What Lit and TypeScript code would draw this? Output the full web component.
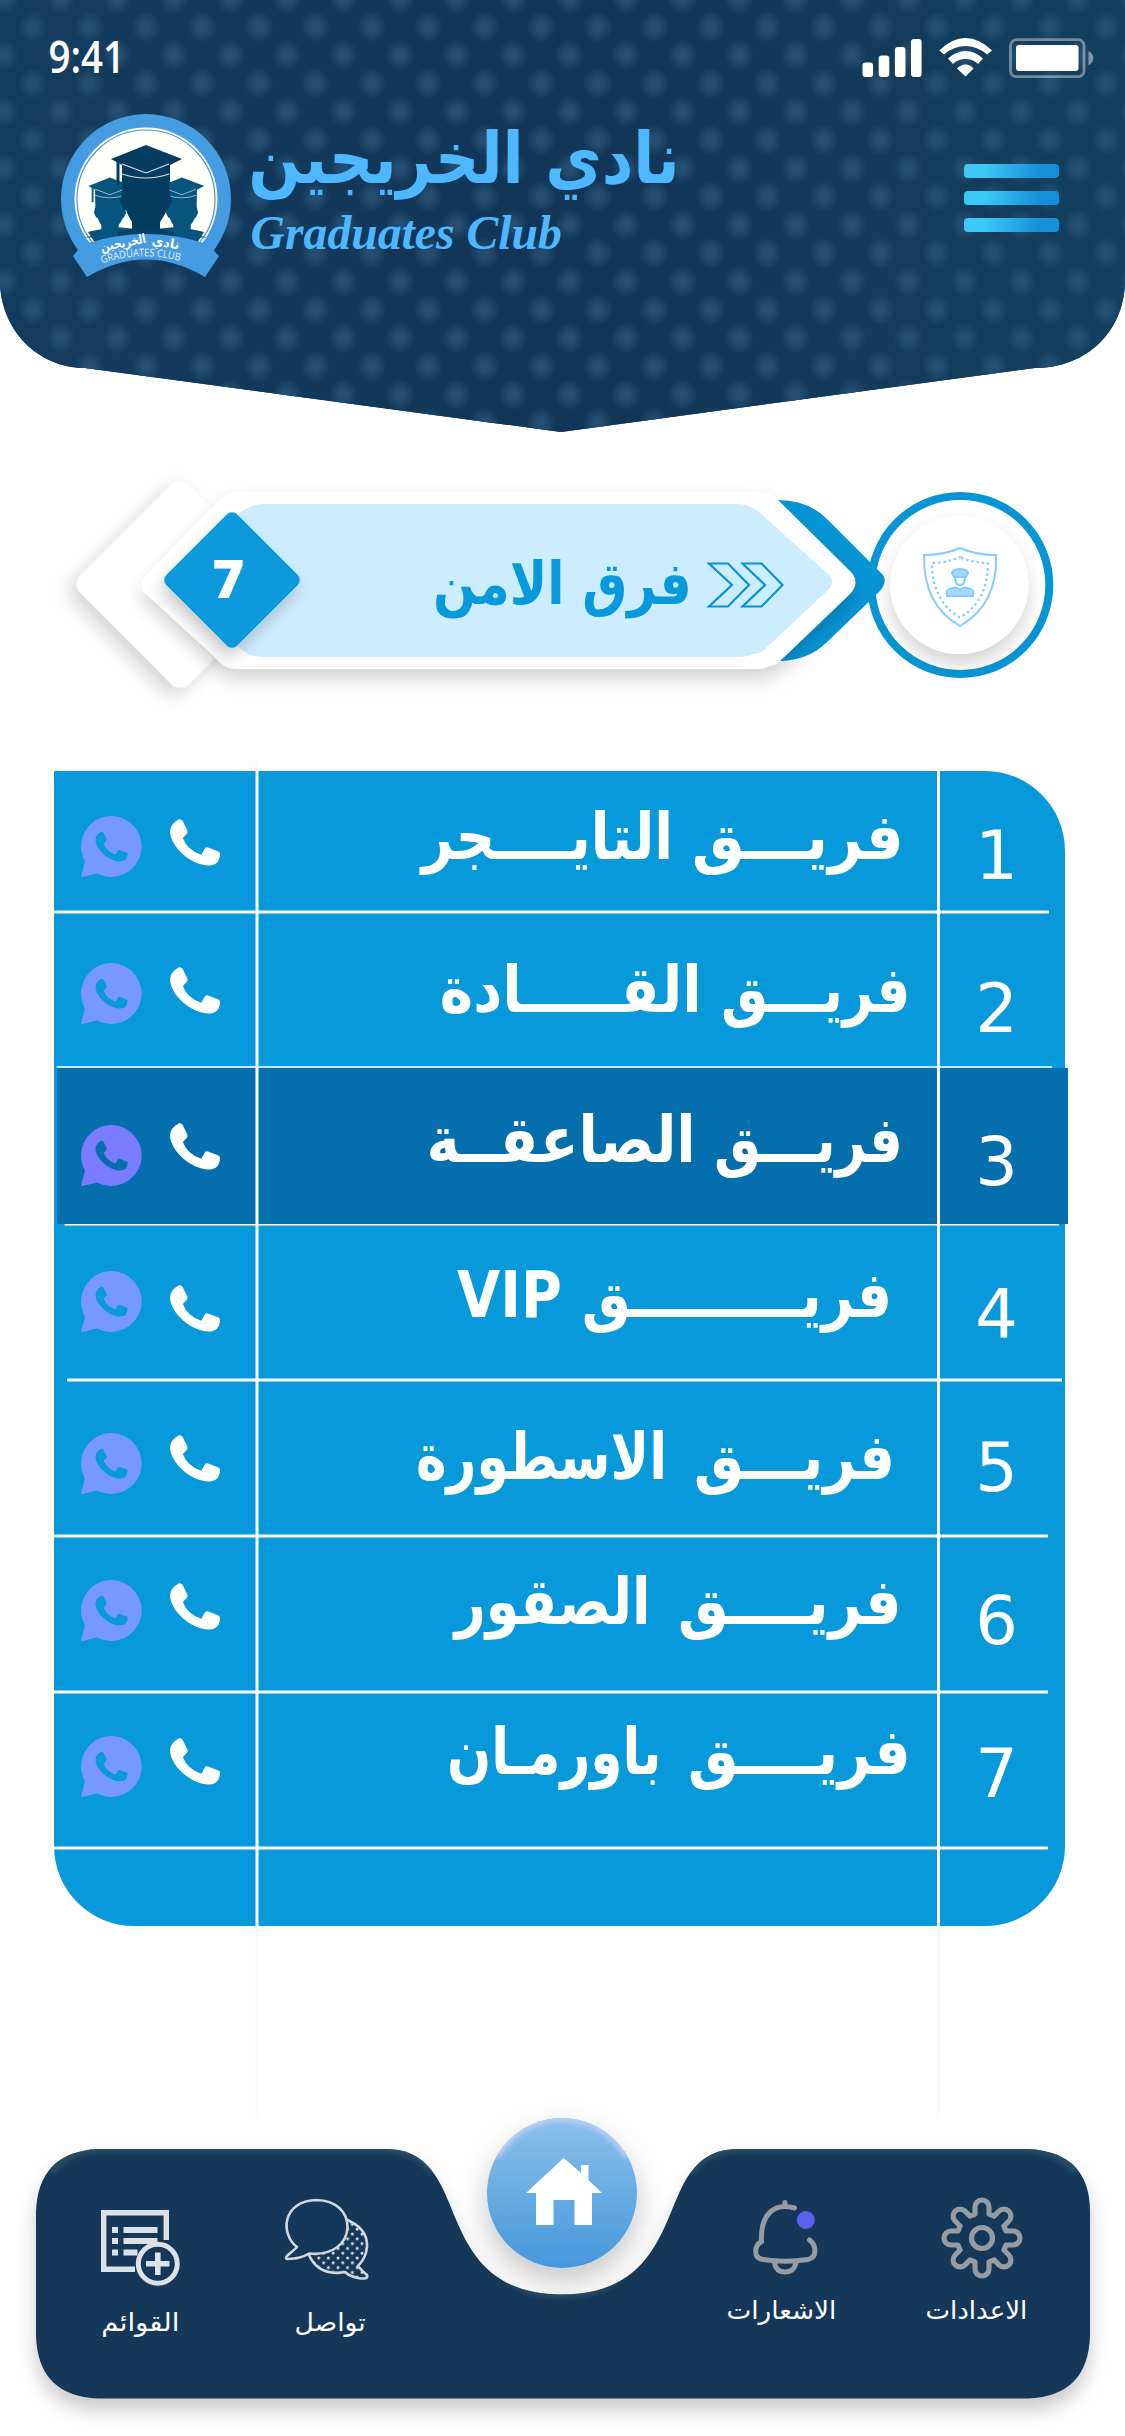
import { LitElement, html, css, svg } from "lit";
import { customElement, property } from "lit/decorators.js";
import { styleMap } from "lit/directives/style-map.js";

const ARABIC = '"DejaVu Sans", sans-serif';

/**
 * A line of text whose ink spans exactly `width` pixels, with its
 * baseline on the bottom edge of a box that is `rise` pixels high.
 */
@customElement("fit-label")
class FitLabel extends LitElement {
  static styles = css`
    :host { display: block; flex: none; direction: ltr; }
    .ink { display: inline-block; white-space: pre; transform-origin: 0 0; line-height: 1; vertical-align: top; }
  `;
  @property() text = "";
  @property() font = ARABIC;
  @property() face = "bold";
  @property({ type: Number }) width = 100;
  @property({ type: Number }) rise = 20;
  @property({ type: Number }) size = 0;

  render() {
    const ctx = document.createElement("canvas").getContext("2d")!;
    const rtl = /[\u0600-\u06ff]/.test(this.text);
    ctx.direction = rtl ? "rtl" : "ltr";
    ctx.textAlign = "left";
    ctx.font = `${this.face} 100px ${this.font}`;
    const m = ctx.measureText(this.text);
    const size = this.size || (100 * this.rise) / m.actualBoundingBoxAscent;
    const k = size / 100;
    const left = -m.actualBoundingBoxLeft * k;
    const right = m.actualBoundingBoxRight * k;
    const scale = this.width / (right - left);
    const up = m.fontBoundingBoxAscent * k;
    const down = m.fontBoundingBoxDescent * k;
    const baseline = (size - up - down) / 2 + up;
    const box = { display: "block", width: `${this.width}px`, height: `${this.rise}px` };
    const ink = {
      font: `${this.face} ${size}px/1 ${this.font}`,
      direction: rtl ? "rtl" : "ltr",
      transform: `translate(${-left * scale}px, ${this.rise - baseline}px) scaleX(${scale})`,
    };
    return html`<span style=${styleMap(box)}><span class="ink" style=${styleMap(ink)}>${this.text}</span></span>`;
  }
}

interface Team {
  no: number;
  top: number;
  base: number;
  numBase: number;
  phone: number;
  chat: number;
  words: [string, number, number][];
}

const TEAMS: Team[] = [
  { no: 1, top: 771, base: 858.5, numBase: 880, phone: 819, chat: 815.5, words: [["التايــــجر", 419, 668.5], ["فريـــق", 693.6, 899]] },
  { no: 2, top: 912, base: 1011.5, numBase: 1033, phone: 967, chat: 962.5, words: [["القـــــادة", 442, 697], ["فريـــق", 722.5, 906]] },
  { no: 3, top: 1068, base: 1161.5, numBase: 1186, phone: 1123, chat: 1124.5, words: [["الصاعقــة", 430, 691], ["فريـــق", 716, 899]] },
  { no: 4, top: 1224, base: 1317, numBase: 1339, phone: 1284.6, chat: 1271.3, words: [["VIP", 457, 560], ["فريـــــــــق", 584, 888]] },
  { no: 5, top: 1380, base: 1479, numBase: 1492, phone: 1434.8, chat: 1433.4, words: [["الاسطورة", 418, 662.7], ["فريـــق", 696, 891]] },
  { no: 6, top: 1536, base: 1623.5, numBase: 1645, phone: 1582.6, chat: 1580, words: [["الصقور", 452, 646], ["فريــــق", 679.5, 897]] },
  { no: 7, top: 1692, base: 1774, numBase: 1798, phone: 1738, chat: 1736.4, words: [["باورمـان", 450, 657.6], ["فريــــق", 690.5, 907]] },
];

const HANDSET = "M9 .3Q11.5 0 12.7 2L17.3 11.5Q18.2 13.5 16.6 15L12.9 19Q17 31 31.3 35.7L34.8 29.5Q36 27.8 38 28.5L48.5 32.6Q50 33.3 50 35Q49.5 46.5 38.5 46.6C21 46 .5 28 0 12.5Q.3 5 9 .3Z";

const gearPath = () => {
  const pt = (x: number, y: number, a: number) =>
    `${(x * Math.cos(a) - y * Math.sin(a)).toFixed(2)} ${(x * Math.sin(a) + y * Math.cos(a)).toFixed(2)}`;
  let d = "";
  for (let i = 0; i < 8; i++) {
    const a = (i * Math.PI) / 4;
    d += `${i ? "L" : "M"}${pt(-7, -24, a)}L${pt(-7, -31, a)}A7 7 0 0 1 ${pt(7, -31, a)}L${pt(7, -24, a)}`;
  }
  return d + "Z";
};

@customElement("club-crest")
class ClubCrest extends LitElement {
  static styles = css`
    :host { display: block; width: 172px; height: 166px; }
    svg { display: block; }
    .band { font: bold 13px "DejaVu Sans", sans-serif; fill: #fff; }
    .latin { font: 10.5px "Open Sans", sans-serif; fill: #e4f0fb; }
  `;
  render() {
    const grad = (tone: string) => svg`
      <path fill=${tone} d="M-35 -37L0 -51L36 -37L24 -31V-13Q23 -8 24 -2L26 6L22 14H21Q17 22 14 26V34Q22 42 40 46H-40Q-20 42 -14 34V26Q-18 20 -20 14H-22L-26 6L-24 -2Q-23 -8 -24 -13V-31Z"/>
      <path fill="none" stroke="#d5e4ee" stroke-width="1.1" d="M-24 -32L0 -23L23 -32M-24 -22Q0 -14 23 -22"/>
      <path stroke=${tone} stroke-width="3" d="M-28 -36V-11"/>`;
    return html`<svg width="172" height="166" viewBox="60 112 172 166">
      <defs><clipPath id="upper"><rect x="60" y="112" width="172" height="141"/></clipPath></defs>
      <g clip-path="url(#upper)">
        <circle cx="146" cy="199" r="85" fill="#469ce1"/>
        <circle cx="146" cy="199" r="71.5" fill="#fffffb"/>
        <circle cx="146" cy="199" r="69" fill="none" stroke="#4d93c4" stroke-width="1.2"/>
      </g>
      <path fill="#0a5078" d="M88 232Q100 229 116 227L146 230L176 227Q192 229 204 232L197 243H95Z"/>
      <g transform="translate(110 209) scale(.62)">${grad("#06557f")}</g>
      <g transform="translate(182 209) scale(.62)">${grad("#06557f")}</g>
      <g transform="translate(146 196)">${grad("#053c60")}</g>
      <path fill="#053f63" d="M118 233Q128 228 146 228T174 233V242H118Z"/>
      <path fill="#469ce1" d="M78 250L88 243Q146 225 204 243L213 250L219 256L205 277Q146 242 87 277L73 256Z"/>
      <path id="arc" fill="none" d="M102 263.500Q142 250 181 261.500"/>
      <text class="band" direction="rtl" text-anchor="middle" transform="translate(124 247) rotate(-11)" textLength="46" lengthAdjust="spacingAndGlyphs">الخريجين</text>
      <text class="band" direction="rtl" text-anchor="middle" transform="translate(165 247) rotate(9)" textLength="28" lengthAdjust="spacingAndGlyphs">نادي</text>
      <text class="latin"><textPath href="#arc" textLength="79" lengthAdjust="spacingAndGlyphs">GRADUATES CLUB</textPath></text>
    </svg>`;
  }
}

@customElement("app-header")
class AppHeader extends LitElement {
  static styles = css`
    :host { display: block; height: 432px; }
    .plate {
      display: flex; flex-direction: column; height: 432px; box-sizing: border-box;
      background-color: #123b5d;
      background-image:
        radial-gradient(ellipse 15px 16px at center, #254f71 0, rgba(37, 79, 113, .85) 35%, rgba(37, 79, 113, 0) 100%),
        radial-gradient(ellipse 15px 16px at center, #254f71 0, rgba(37, 79, 113, .85) 35%, rgba(37, 79, 113, 0) 100%),
        linear-gradient(90deg, #123c5e, #123658 45%, #123658 55%, #13405f);
      background-size: 56.5px 56.6px, 56.5px 56.6px, 100% 100%;
      background-position: 4.5px -1.5px, 32.7px 26.8px, 0 0;
      clip-path: path("M0 0H1125V280C1125 330 1088 368 1035 368L561 432L85 368C38 368 0 330 0 280Z");
    }
    .status { display: flex; padding: 37px 30px 0 49.5px; height: 40px; justify-content: space-between; }
    .time { padding-top: 5px; }
    .brand { display: flex; padding: 35px 66px 0 60px; }
    .names { display: flex; flex-direction: column; padding: 17px 0 0 20px; gap: 33px; color: #4db8ff; }
    .menu { margin: 52px 0 0 auto; display: flex; flex-direction: column; gap: 13px; }
    .bar { width: 95px; height: 14px; border-radius: 4px; background: linear-gradient(105deg, #3bc8f5 22%, #168fd8 80%); }
    .white { color: #fff; }
  `;
  render() {
    return html`<div class="plate">
      <div class="status">
        <fit-label class="time white" text="9:41" face="600" font='"Open Sans", sans-serif' .width=${68} .rise=${32}></fit-label>
        <svg width="235" height="42" viewBox="861 36 235 42" fill="#fff">
          <rect x="863.5" y="61.5" width="10.6" height="14.5" rx="3"/>
          <rect x="879.7" y="54.5" width="10.6" height="21.5" rx="3"/>
          <rect x="895.9" y="46" width="10.6" height="30" rx="3"/>
          <rect x="912" y="38" width="10.6" height="38" rx="3"/>
          <path d="M940.3 49.5Q953 37 966.5 37T993 49.5L988.3 53.5Q978 45 966.5 45T945 53.5ZM949 57.5Q957 50 966.5 50T984 57.5L979 63Q974 58 966.5 58T954 63ZM958 67.5Q962 63.5 966.5 63.5T974.5 67.5L966.5 75.5Z"/>
          <rect x="1011.5" y="38.7" width="73.5" height="37" rx="6" fill="none" stroke="#fff" stroke-opacity=".4" stroke-width="2.8"/>
          <rect x="1017" y="44" width="62.5" height="26" rx="3"/>
          <path fill-opacity=".45" d="M1089.5 50Q1094.3 52.5 1094.3 57T1089.5 64.5Z"/>
        </svg>
      </div>
      <div class="brand">
        <club-crest></club-crest>
        <div class="names">
          <fit-label text="نادي الخريجين" .width=${423} .rise=${54}></fit-label>
          <fit-label text="Graduates Club" face="italic bold" font='"Liberation Serif", serif' .width=${309} .rise=${33}></fit-label>
        </div>
        <div class="menu"><div class="bar"></div><div class="bar"></div><div class="bar"></div></div>
      </div>
    </div>`;
  }
}

@customElement("section-banner")
class SectionBanner extends LitElement {
  static styles = css`
    :host { display: grid; height: 339px; }
    .art, .texts { grid-area: 1 / 1; }
    .texts { display: flex; align-items: flex-start; padding: 129px 0 0 214px; color: #0799db; }
    .count { color: #fff; }
    .title { margin: -2px 0 0 193px; }
  `;
  render() {
    return html`
      <svg class="art" width="1125" height="339" viewBox="0 432 1125 339">
        <defs>
          <filter id="soft" x="-30%" y="-30%" width="160%" height="170%">
            <feDropShadow dx="0" dy="10" stdDeviation="9" flood-color="#000" flood-opacity=".17"/>
          </filter>
          <filter id="lift" x="-30%" y="-30%" width="160%" height="160%">
            <feDropShadow dx="4" dy="9" stdDeviation="8" flood-color="#000" flood-opacity=".2"/>
          </filter>
        </defs>
        <rect x="103.7" y="508.2" width="152.6" height="152.6" rx="12" fill="#fff" transform="rotate(45 180 584.5)" filter="url(#soft)"/>
        <circle cx="960.3" cy="585" r="89" fill="#fff" stroke="#0795d6" stroke-width="8"/>
        <path fill="#0795d6" d="M770 500H778Q808 500 827 519L880 572Q890 580 879 592L826 643Q808 660 781 661H770Z"/>
        <path fill="#fff" filter="url(#soft)" d="M145 577L213 507Q224 492 240 492H756Q770 492 778 500L850 571Q861 582 850 594L780 661Q776 665 770 665.500Q764 669 756 669H236Q224 669 214 656L146 594Q138 586 145 577Z"/>
        <path fill="#ccecff" d="M232 520Q247 504 264 504H738Q750 504 760 513L828 574Q836 582 828 590L764 650Q759 654 753 654Q747 657 738 657H264Q247 657 238 646Z"/>
        <rect x="182" y="530" width="100" height="100" rx="7" fill="#0799db" transform="rotate(45 232 580)" filter="url(#lift)"/>
        <g fill="none" stroke="#0795d6" stroke-width="2.2">
          <path d="M709 563.500H728L749 585L728 606.500H709L732 585Z"/>
          <path d="M742.500 563.500H761.500L782.500 585L761.500 606.500H742.500L765 585Z"/>
        </g>
        <circle cx="959.300" cy="585" r="69" fill="#fff" filter="url(#soft)"/>
        <g fill="none" stroke="#84ccff" stroke-width="2">
          <path d="M960 548Q944 555 924 555Q923 605 960 626Q998 604 996 555Q976 555 960 548Z"/>
          <path stroke-width="2.600" stroke-linecap="round" stroke-dasharray=".1 5.300" d="M960 557Q947 563 932 563Q932 601 960 617.500Q988 601 988 563Q973 563 960 557Z"/>
          <g fill="#a5d9ff">
            <path d="M952 573Q952 569.500 960 569Q968 569.500 968 573L966 577H954Z"/>
            <path d="M947 596V591Q948 588.500 956 587.500L960 590L964 587.500Q972 588.500 973 591V596Z"/>
            <path fill="#fff" d="M955 577Q955 585 960 585T965 577Z"/>
          </g>
        </g>
      </svg>
      <div class="texts">
        <fit-label class="count" text="7" face="800" font='"Open Sans", sans-serif' .width=${29} .rise=${38}></fit-label>
        <fit-label class="title" text="فرق الامن" .width=${252} .rise=${45}></fit-label>
      </div>`;
  }
}

@customElement("team-table")
class TeamTable extends LitElement {
  static styles = css`
    :host { display: grid; width: 1125px; height: 1155px; }
    .sheet {
      grid-area: 1 / 1; margin: 0 60.5px 0 54px; background: #0899da;
      border-radius: 0 80px 80px 80px; --hole: #0899da;
    }
    .rules { grid-area: 1 / 1; overflow: visible; }
    .row { display: flex; align-items: flex-start; color: #fff; --chat: #7799ff; }
    .picked { background: #056eac; --hole: #056eac; --chat: #7a7bff; margin: 0 -3.5px 0 3px; }
    .picked .actions { width: 200px; padding-left: 23.5px; }
    .actions { display: flex; width: 203px; box-sizing: border-box; padding-left: 26.5px; gap: 28px; align-items: flex-start; }
    .name { display: flex; width: 681px; align-items: flex-start; }
    .no { width: 117px; text-align: center; font: 67px/50px "DejaVu Sans", sans-serif; }
    svg { display: block; flex: none; }
  `;
  render() {
    const px = (n: number) => `${n}px`;
    return html`
      <div class="sheet">
        ${TEAMS.map((t, i) => {
          const next = TEAMS[i + 1]?.top ?? 1848;
          let x = 257;
          return html`<div class="row ${t.no === 3 ? "picked" : ""}" style=${styleMap({ height: px(next - t.top) })}>
            <div class="actions">
              <svg width="61" height="61" viewBox="0 0 61 61" style=${styleMap({ marginTop: px(t.chat - t.top) })}>
                <path fill="var(--chat)" d="M30.500 0A30.500 30.500 0 1 1 16 57.500L1.500 61Q0 61 .2 59.500L4 45.500A30.500 30.500 0 0 1 30.500 0Z"/>
                <path fill="var(--hole)" transform="translate(14.500 15.600) scale(.642)" d=${HANDSET}/>
              </svg>
              <svg width="51" height="47" viewBox="0 0 51 47" style=${styleMap({ marginTop: px(t.phone - t.top) })}>
                <path fill="#fff" d=${HANDSET}/>
              </svg>
            </div>
            <div class="name">
              ${t.words.map(([word, from, to]) => {
                const gap = from - x;
                x = to;
                const at = { marginLeft: px(gap), marginTop: px(t.base - 50 - t.top) };
                return html`<fit-label style=${styleMap(at)} .text=${word} .width=${to - from} .rise=${50} .size=${64}></fit-label>`;
              })}
            </div>
            <div class="no" style=${styleMap({ marginTop: px(t.numBase - 49 - t.top) })}>${t.no}</div>
          </div>`;
        })}
      </div>
      <svg class="rules" width="1125" height="1155" viewBox="0 771 1125 1155">
        <path stroke="#fff9fa" stroke-width="3" d="M257 760V2118M938.500 771V2118"/>
        <path stroke="#fff" stroke-width="3" d="M54 912H1049M67 1380H1062M54 1536H1048M54 1692H1048M54 1848H1048"/>
        <path stroke="#fff" stroke-width="1.600" d="M56.500 1067H1052M64.500 1224.700H1059"/>
      </svg>`;
  }
}

@customElement("tab-bar")
class TabBar extends LitElement {
  static styles = css`
    :host { display: grid; height: 510px; }
    .art, .items { grid-area: 1 / 1; }
    .items { display: flex; align-items: flex-start; padding: 271px 0 0 101px; color: #fff; }
    .item { display: flex; flex-direction: column; }
    svg { display: block; }
    .lists { width: 80px; padding-top: 12px; }
    .lists .cap { margin: 25px 0 0 1.5px; }
    .chat { margin-left: 103px; width: 86px; padding-top: 1px; }
    .chat .cap { margin: 32px 0 0 12px; }
    .bell { margin-left: 358px; width: 107px; padding-top: 2px; }
    .bell .cap { margin-top: 24px; }
    .bell svg { margin-left: 24px; }
    .gear { margin-left: 92px; width: 99px; }
    .gear svg { margin-left: 14px; }
    .gear .cap { margin-top: 21px; }
  `;
  render() {
    return html`
      <svg class="art" width="1125" height="510" viewBox="0 1926 1125 510">
        <defs>
          <linearGradient id="sky" x1="0" y1="0" x2="0" y2="1"><stop offset="0" stop-color="#8cc0ea"/><stop offset="1" stop-color="#4598dc"/></linearGradient>
          <filter id="drop" x="-10%" y="-20%" width="120%" height="150%"><feDropShadow dx="0" dy="12" stdDeviation="9" flood-color="#000" flood-opacity=".2"/></filter>
          <filter id="halo" x="-50%" y="-50%" width="200%" height="200%"><feDropShadow dx="0" dy="14" stdDeviation="15" flood-color="#000" flood-opacity=".22"/></filter>
          <filter id="mist" x="-10%" y="-10%" width="120%" height="120%"><feGaussianBlur stdDeviation="2.5"/></filter>
          <path id="tray" d="M98 2149H386.500C414 2149 430 2163 442 2187C462 2227 472 2294.500 562 2294.500S662 2227 682 2187C694 2163 710 2149 737.500 2149H1028Q1090 2152 1090 2212V2336Q1088 2396 1028 2398.500H98Q38 2396 36 2336V2212Q38 2152 98 2149Z"/>
          <clipPath id="trayClip"><use href="#tray"/></clipPath>
          <clipPath id="disc"><circle cx="562" cy="2193" r="75"/></clipPath>
        </defs>
        <use href="#tray" fill="#123859" filter="url(#drop)"/>
        <g clip-path="url(#trayClip)">
          <path fill="none" stroke="#31546e" stroke-width="9" filter="url(#mist)" opacity=".7" d="M50 2172Q66 2150 98 2149H386.500C410 2149 424 2158 434 2172M506 2277Q528 2294.500 562 2294.500T618 2277M690 2172C700 2158 714 2149 737.500 2149H1028Q1060 2150 1076 2172"/>
        </g>
        <circle cx="562" cy="2193" r="75" fill="url(#sky)" filter="url(#halo)"/>
        <g clip-path="url(#disc)"><path d="M495 2156A77 77 0 0 1 629 2156" fill="none" stroke="#b9cdf6" stroke-width="10" filter="url(#mist)"/></g>
        <path fill="#fff" d="M563.700 2158L526 2193H536V2225H553.500V2200H574.500V2225H592V2193H602L588.500 2180V2165H581V2173Z"/>
      </svg>
      <div class="items">
        <div class="item lists">
          <svg width="80" height="78" viewBox="101 2209 80 78">
            <path fill="none" stroke="#dbe1e8" stroke-width="5.400" d="M135 2269.300H103.700V2212.700H166.300V2240"/>
            <path fill="#dbe1e8" d="M112 2227h6v6h-6zM123.500 2227h34v6h-34zM112 2238h6v6h-6zM123.500 2238h34v6h-34zM112 2249.500h6v6h-6zM123.500 2249.500h14v6h-14z"/>
            <circle cx="157.800" cy="2263.700" r="19.500" fill="#133859" stroke="#dbe1e8" stroke-width="5"/>
            <path stroke="#dbe1e8" stroke-width="5.600" d="M146 2263.700H169.500M157.800 2252.500V2275"/>
          </svg>
          <fit-label class="cap" text="القوائم" face="normal" .width=${74} .rise=${19}></fit-label>
        </div>
        <div class="item chat">
          <svg width="86" height="82" viewBox="284 2198 86 82" fill="#133859" stroke="#d0d8df" stroke-width="2.600" stroke-linejoin="round">
            <defs><pattern id="dots" width="9.600" height="9.600" patternUnits="userSpaceOnUse"><circle cx="2" cy="2" r="1.500" fill="#dbe1e8" stroke="none"/><circle cx="6.800" cy="6.800" r="1.500" fill="#dbe1e8" stroke="none"/></pattern></defs>
            <path fill="url(#dots)" d="M345 2219Q368 2228 367 2247Q366 2258 358 2266Q362 2271 367 2275Q369 2280 358 2278Q349 2276 345 2272Q318 2277 308 2253Z"/>
            <path d="M297 2247C280 2234 282 2201 316.500 2200C336 2200.500 347.500 2212 347.500 2227C347 2244 332 2256 309 2253.500C302 2258 296 2258.500 287 2259C283 2257 293 2252 297 2247Z"/>
          </svg>
          <fit-label class="cap" text="تواصل" face="normal" .width=${69} .rise=${19}></fit-label>
        </div>
        <div class="item bell">
          <svg width="66" height="77" viewBox="752 2199 66 77" fill="none" stroke="#969ca3" stroke-width="5" stroke-linecap="round">
            <path d="M794.500 2208C775 2202 760 2214 761.500 2241.500C754 2246 753 2258 763 2259.500Q785 2263 808 2259.500C818 2257 816 2245 809.500 2240M785 2202.500V2206M774.500 2263Q776 2272 785 2272T796 2263"/>
            <circle cx="805.800" cy="2220" r="9" fill="#5b60ee" stroke="none"/>
          </svg>
          <fit-label class="cap" text="الاشعارات" face="normal" .width=${106} .rise=${19}></fit-label>
        </div>
        <div class="item gear">
          <svg width="82" height="82" viewBox="-41 -41 82 82" fill="none" stroke="#969ca3" stroke-width="5.200" stroke-linejoin="round">
            <path d=${gearPath()}/><circle r="10.500"/>
          </svg>
          <fit-label class="cap" text="الاعدادات" face="normal" .width=${98} .rise=${19}></fit-label>
        </div>
      </div>`;
  }
}

@customElement("app-root")
class AppRoot extends LitElement {
  static styles = css`
    :host { display: flex; flex-direction: column; width: 1125px; height: 2436px; overflow: hidden; background: #fefefe; }
  `;
  render() {
    return html`
      <app-header></app-header>
      <section-banner></section-banner>
      <team-table></team-table>
      <tab-bar></tab-bar>`;
  }
}
